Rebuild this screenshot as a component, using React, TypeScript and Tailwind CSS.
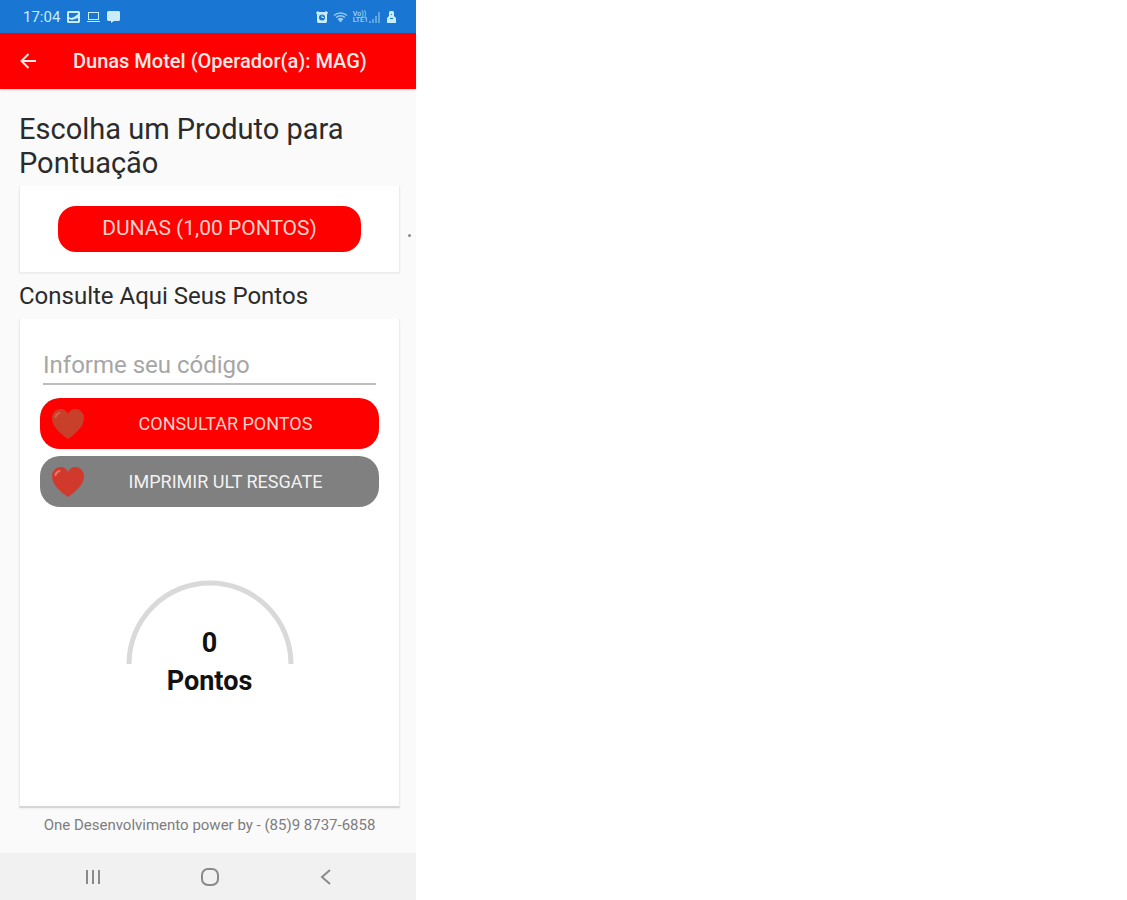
import { useState, type ReactNode } from 'react';
import { clsx } from 'clsx';

export default function App() {
  return (
    <div className="min-h-screen bg-white font-['Roboto',sans-serif]">
      <div className="flex min-h-screen w-full max-w-[416px] flex-col bg-[#fafafa]">
        <StatusBar />
        <AppBar title="Dunas Motel (Operador(a): MAG)" />
        <main className="flex flex-1 flex-col pt-[23px] pr-4 pl-[19px]">
          <h1 className="text-[29px] leading-[34px] text-[#2b2b2b]">
            Escolha um Produto para Pontuação
          </h1>
          <ProductCard />
          <h2 className="mt-[7px] text-2xl leading-8 text-[#2b2b2b]">Consulte Aqui Seus Pontos</h2>
          <PointsCard />
          <footer className="pt-[7px] pb-[18px] text-center text-[15px] leading-5 text-[#7d7d7d]">
            One Desenvolvimento power by - (85)9 8737-6858
          </footer>
        </main>
        <NavBar />
      </div>
    </div>
  );
}

function StatusBar() {
  return (
    <div className="flex h-[33px] items-center justify-between bg-[#1976d2] pr-5 pl-[23px] text-[#c8ecf8]">
      <div className="flex items-center gap-[7px]">
        <span className="text-[15px] leading-5">17:04</span>
        <svg className="h-3 w-[13px]" viewBox="0 0 13 12" aria-hidden="true">
          <path
            fill="currentColor"
            fillRule="evenodd"
            d="M1 0h11l1 1v10l-1 1H1l-1-1V1zM2 2v4l2 1 3-1 4-3V2zM2 10h9V7L8 8 5 9 2 8z"
          />
        </svg>
        <svg className="h-3 w-[13px]" viewBox="0 0 13 12" fill="none" stroke="currentColor" aria-hidden="true">
          <rect x="1.500" y="1.500" width="10" height="7" />
          <path d="M0 10.500h13M4 8.500h5" />
        </svg>
        <svg className="h-3 w-[13px]" viewBox="0 0 13 12" aria-hidden="true">
          <path fill="currentColor" d="M1 0h11l1 1v8l-1 1H7l-3 2v-2H1L0 9V1z" />
        </svg>
      </div>
      <div className="flex items-center gap-[5px]">
        <svg className="h-3 w-3" viewBox="0 0 12 12" aria-hidden="true">
          <path fill="currentColor" d="M0 1.500 2 0l1 1h6l1-1 2 1.500-1 2V11l-1 1H2l-1-1V3.500z" />
          <circle cx="6" cy="6.500" r="3" fill="#1976d2" />
          <path d="M6 4.500v2h2" fill="none" stroke="currentColor" />
        </svg>
        <svg className="h-3 w-[15px] opacity-70" viewBox="0 0 15 12" aria-hidden="true">
          <path d="M1 4.500a9.500 9.500 0 0 1 13 0M3 6.500a6.500 6.500 0 0 1 9 0" fill="none" stroke="currentColor" strokeWidth="1.500" />
          <path fill="currentColor" d="M4.500 8a4.500 4.500 0 0 1 6 0l-3 3.500z" />
        </svg>
        <div className="flex items-center">
          <span className="flex flex-col text-[7px] leading-[6px] font-medium opacity-80">
            <span>Vo))</span>
            <span>LTE1</span>
          </span>
          <svg className="h-3 w-[14px] opacity-40" viewBox="0 0 14 12" aria-hidden="true">
            <path fill="currentColor" d="M1 12v-2h2v2zM4 12V8h2v4zM7 12V5h2v7zM10 12V1h2v11z" />
          </svg>
        </div>
        <svg className="h-3 w-[9px]" viewBox="0 0 9 12" aria-hidden="true">
          <path fill="currentColor" d="M3 0h3l1 1v4l2 2v5H0V7l2-2V1z" />
          <path d="M3 7.500h3M4 3.500h1" stroke="#1976d2" />
        </svg>
      </div>
    </div>
  );
}

function AppBar({ title }: { title: string }) {
  return (
    <header className="flex h-14 items-center gap-[37px] bg-[#fe0000] px-5 text-[#ffe9e4] shadow-sm">
      <button type="button" aria-label="Voltar">
        <svg className="h-4 w-4" viewBox="0 0 16 16" fill="none" stroke="currentColor" strokeWidth="2" aria-hidden="true">
          <path d="M16 8H2M8.500 1 1.500 8l7 7" />
        </svg>
      </button>
      <span className="text-xl font-medium whitespace-nowrap">{title}</span>
    </header>
  );
}

function ProductCard() {
  return (
    <section className="relative mt-[6px] border border-t-0 border-[#ececec] bg-white px-[38px] py-5 shadow-xs">
      <button
        type="button"
        className="h-[46px] w-full rounded-[18px] bg-[#fe0000] text-[21px] text-[#ffd0c8]"
      >
        DUNAS (1,00 PONTOS)
      </button>
      <span className="absolute top-12 -right-3 h-[3px] w-[3px] rounded-full bg-[#8a8a8a]" />
    </section>
  );
}

function PointsCard() {
  const [code, setCode] = useState('');

  return (
    <section className="mt-[7px] flex flex-1 flex-col border border-t-0 border-b-2 border-[#ececec] border-b-[#d6d6d6] bg-white px-5 pt-7 shadow-xs">
      <input
        type="text"
        aria-label="Informe seu código"
        placeholder="Informe seu código"
        value={code}
        onChange={(e) => setCode(e.target.value)}
        className="mx-[3px] h-[38px] border-b-2 border-[#bdbdbd] text-2xl text-[#2b2b2b] outline-none placeholder:text-[#a6a6a6]"
      />
      <div className="mt-[13px] flex flex-col gap-[7px]">
        <HeartButton className="bg-[#fe0000] text-[#ffd0c8]" heart="#c8402a" shine="#d8604c">
          CONSULTAR PONTOS
        </HeartButton>
        <HeartButton className="bg-[#808080] text-[#f2f2f2]" heart="#d0392b" shine="#e8796b">
          IMPRIMIR ULT RESGATE
        </HeartButton>
      </div>
      <Gauge value={0} />
    </section>
  );
}

function HeartButton({
  className,
  heart,
  shine,
  children,
}: {
  className: string;
  heart: string;
  shine: string;
  children: ReactNode;
}) {
  return (
    <button
      type="button"
      className={clsx('flex h-[51px] items-center rounded-[20px] px-3 text-lg', className)}
    >
      <svg className="h-[30px] w-8 shrink-0" viewBox="0 0 32 30" aria-hidden="true">
        <path
          fill={heart}
          d="M16 30C9 25 0 18 0 9 0 4 4 0 8.500 0 12 0 15 2 16 5c1-3 4-5 7.500-5C28 0 32 4 32 9c0 9-9 16-16 21z"
        />
        <path d="M3.500 8c.500-2 2-3.500 4-4" fill="none" stroke={shine} strokeWidth="2" strokeLinecap="round" />
      </svg>
      <span className="flex-1">{children}</span>
    </button>
  );
}

function Gauge({ value }: { value: number }) {
  return (
    <div className="mt-[73px] flex flex-col items-center text-[27px] leading-[38px] font-bold text-[#111]">
      <svg className="h-[84px] w-[168px]" viewBox="0 0 168 84" aria-hidden="true">
        <path d="M3 84a81 81 0 0 1 162 0" fill="none" stroke="#d9d9d9" strokeWidth="5" />
      </svg>
      <span className="-mt-10">{value}</span>
      <span>Pontos</span>
    </div>
  );
}

function NavBar() {
  return (
    <nav className="flex h-[47px] items-center justify-between bg-[#f1f1f1] pr-20 pl-[83px] text-[#8a8a8a]">
      <button type="button" aria-label="Recentes">
        <svg className="h-5 w-5" viewBox="0 0 20 20" fill="none" stroke="currentColor" strokeWidth="2" aria-hidden="true">
          <path d="M4 3v14M10 3v14M16 3v14" />
        </svg>
      </button>
      <button type="button" aria-label="Início">
        <svg className="h-5 w-5" viewBox="0 0 20 20" fill="none" stroke="currentColor" strokeWidth="2" aria-hidden="true">
          <rect x="2" y="2" width="16" height="16" rx="6" />
        </svg>
      </button>
      <button type="button" aria-label="Voltar à tela anterior">
        <svg className="h-5 w-5" viewBox="0 0 20 20" fill="none" stroke="currentColor" strokeWidth="2" aria-hidden="true">
          <path d="M14 3 6 10l8 7" />
        </svg>
      </button>
    </nav>
  );
}
